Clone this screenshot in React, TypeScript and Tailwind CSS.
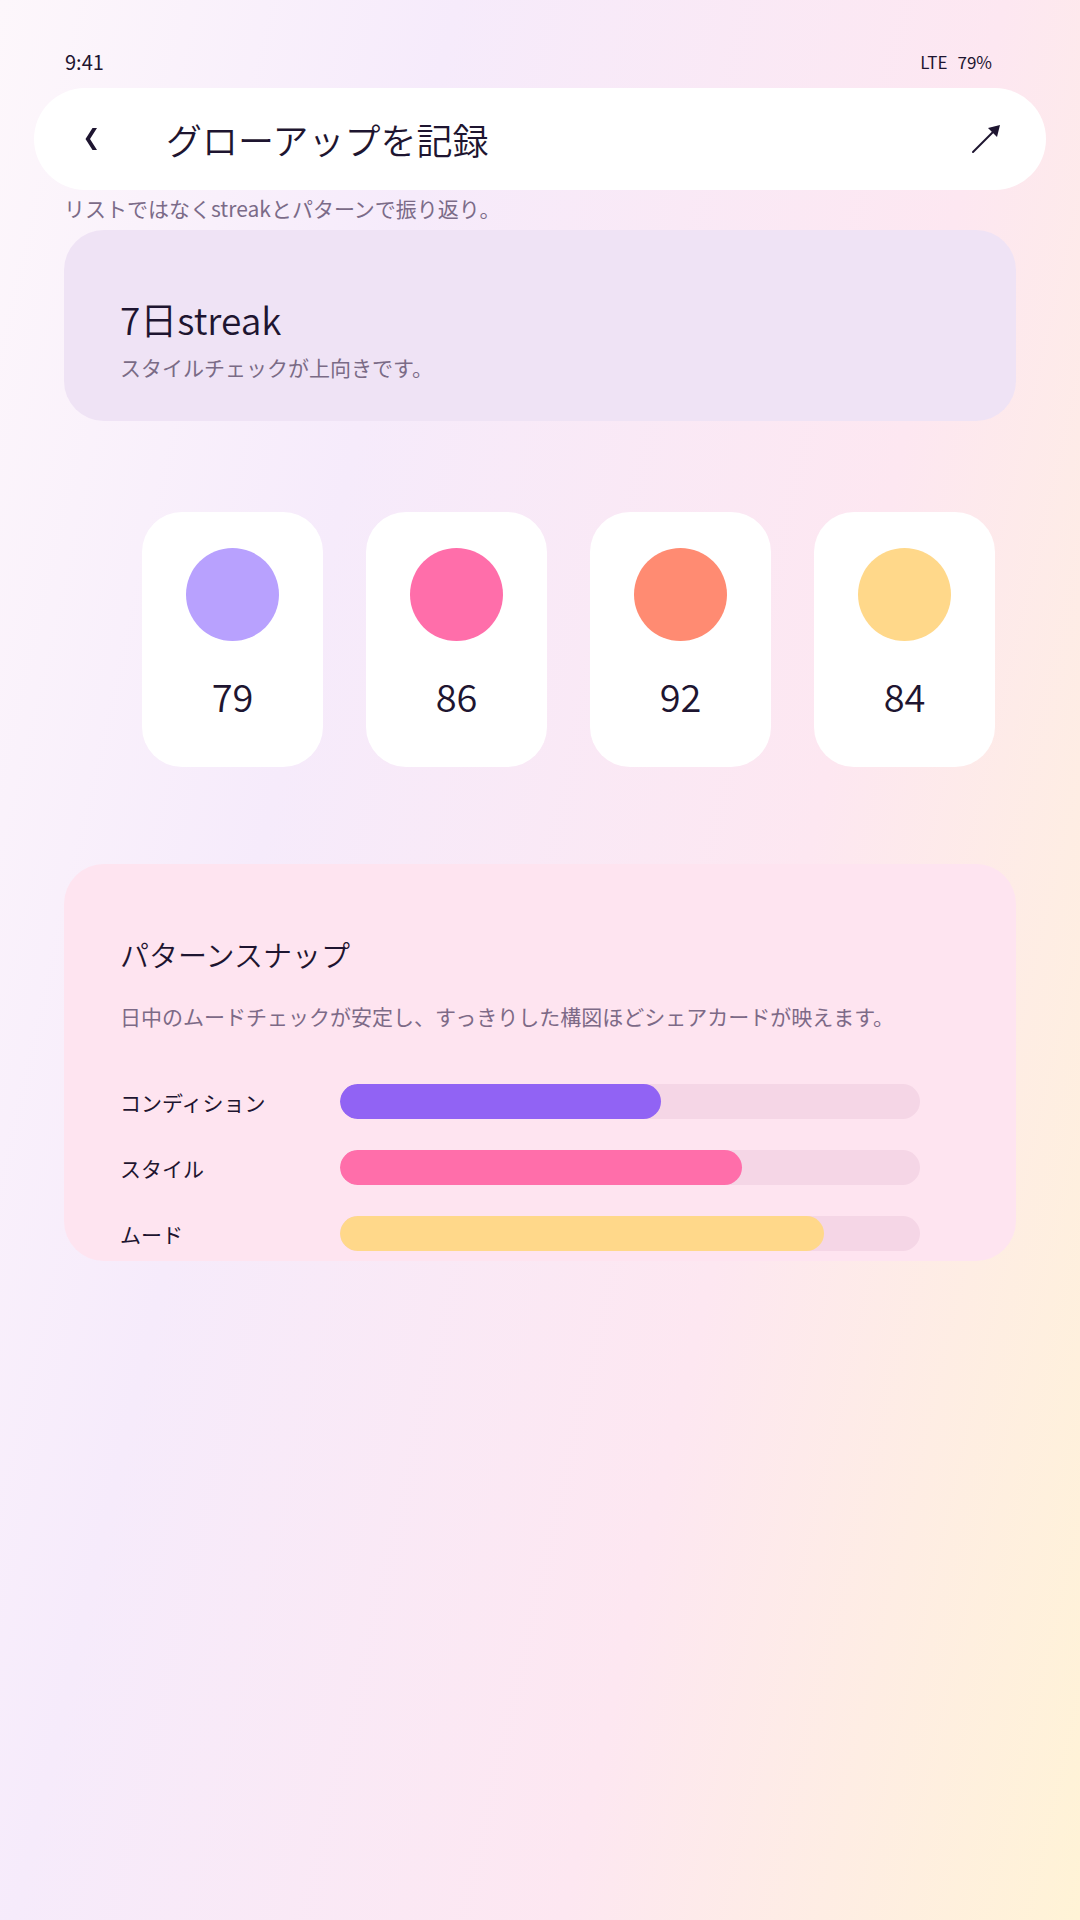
import React from 'react'

const scores = [
  { value: 79, color: 'bg-[#b8a1fe]' },
  { value: 86, color: 'bg-[#ff6eaa]' },
  { value: 92, color: 'bg-[#ff8b72]' },
  { value: 84, color: 'bg-[#ffd88a]' },
]

const bars = [
  { label: 'コンディション', pct: 55.3, color: 'bg-[#9163f4]' },
  { label: 'スタイル', pct: 69.3, color: 'bg-[#ff6eaa]' },
  { label: 'ムード', pct: 83.5, color: 'bg-[#ffd88a]' },
]

export default function App() {
  return (
    <div className="w-[1080px] h-[1920px] bg-[linear-gradient(103deg,#fdf7fb_0%,#f6ebfb_30%,#fde7f1_66%,#fff3d6_100%)] font-['Noto_Sans_CJK_JP','Noto_Sans',sans-serif] text-[#1e1530]">
      {/* status bar */}
      <div className="flex items-center justify-between pt-[47px] pl-[65px] pr-[88px] h-[76px]">
        <span className="text-[20px] leading-[28px]">9:41</span>
        <div className="flex gap-[10px] text-[17px] leading-[28px]">
          <span>LTE</span>
          <span>79%</span>
        </div>
      </div>

      {/* header */}
      <div className="mt-[12px] mx-[34px] h-[102px] rounded-full bg-white flex items-center pl-[51px] pr-[45px]">
        <svg width="12" height="24" viewBox="0 0 12 24" className="shrink-0">
          <polygon points="12,1 5,12 12,23 7.5,23 0.5,12 7.5,1" fill="#1e1530" />
        </svg>
        <h1 className="ml-[69px] text-[36px] leading-[46px] font-[350] flex-1">グローアップを記録</h1>
        <svg width="30" height="30" viewBox="0 0 30 30" className="shrink-0">
          <path d="M2 28 L25 5" stroke="#1e1530" strokeWidth="2" strokeLinecap="round" />
          <polygon points="29,1 17,4 26,13" fill="#1e1530" />
        </svg>
      </div>

      <p className="mt-[4px] px-[64px] text-[21px] leading-[28px] text-[#7b6b88]">
        リストではなくstreakとパターンで振り返り。
      </p>

      {/* streak card */}
      <div className="mt-[8px] mx-[64px] h-[191px] rounded-[40px] bg-[#efe3f5] px-[56px] pt-[66px]">
        <div className="text-[37px] leading-[46px] font-[350]">7日streak</div>
        <div className="mt-[10px] text-[21px] leading-[30px] text-[#7a6b86]">スタイルチェックが上向きです。</div>
      </div>

      {/* score cards */}
      <div className="mt-[91px] flex gap-[43px] pl-[142px]">
        {scores.map((s) => (
          <div key={s.value} className="w-[181px] h-[255px] rounded-[40px] bg-white flex flex-col items-center pt-[36px]">
            <div className={`w-[93px] h-[93px] rounded-full ${s.color}`} />
            <div className="mt-[30px] text-[38px] leading-[50px] font-[350]">{s.value}</div>
          </div>
        ))}
      </div>

      {/* pattern card */}
      <div className="mt-[97px] mx-[64px] h-[397px] rounded-[40px] bg-[#fee4f0] px-[56px] pt-[72px] overflow-hidden">
        <h2 className="text-[29px] leading-[36px] font-[350]">パターンスナップ</h2>
        <p className="mt-[29px] text-[21px] leading-[30px] text-[#7d6a87]">
          日中のムードチェックが安定し、すっきりした構図ほどシェアカードが映えます。
        </p>
        <div className="mt-[53px] flex flex-col gap-[31px]">
          {bars.map((b) => (
            <div key={b.label} className="flex items-center">
              <span className="w-[220px] text-[21px] leading-[28px]">{b.label}</span>
              <div className="w-[580px] h-[35px] rounded-full bg-[#f5d6e6] overflow-hidden">
                <div className={`h-full rounded-full ${b.color}`} style={{ width: `${b.pct}%` }} />
              </div>
            </div>
          ))}
        </div>
      </div>
    </div>
  )
}
